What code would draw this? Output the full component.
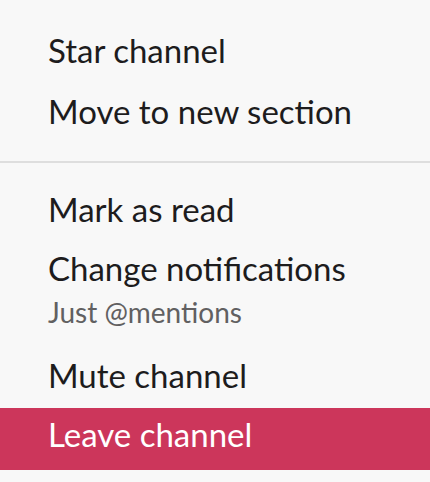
export default function App() {
  const item = "h-[61px] leading-[61px] pl-[48px] text-[33px] text-[#1d1c1d]";
  return (
    <div className="w-[430px] h-[482px] bg-[#f8f8f8] overflow-hidden" style={{ fontFamily: "Lato, 'Noto Sans', sans-serif" }}>
      <div className="pt-[20px]">
        <div className={item}>Star channel</div>
        <div className={item}>Move to new section</div>
      </div>
      <div className="mt-[19px] h-[2px] bg-[#dedede]" />
      <div className="pt-[16px]">
        <div className={item}>Mark as read</div>
        <div className="pl-[48px] pt-[8px]">
          <div className="text-[33px] text-[#1d1c1d] leading-[40px]">Change notifications</div>
          <div className="mt-[6px] text-[28px] text-[#616061] leading-[36px]">Just @mentions</div>
        </div>
        <div className={`mt-[15px] ${item}`}>Mute channel</div>
        <div className="mt-[2px] h-[62px] pt-[6px] pl-[48px] text-[33px] leading-[40px] text-white bg-[#cc365b]">Leave channel</div>
      </div>
    </div>
  );
}
